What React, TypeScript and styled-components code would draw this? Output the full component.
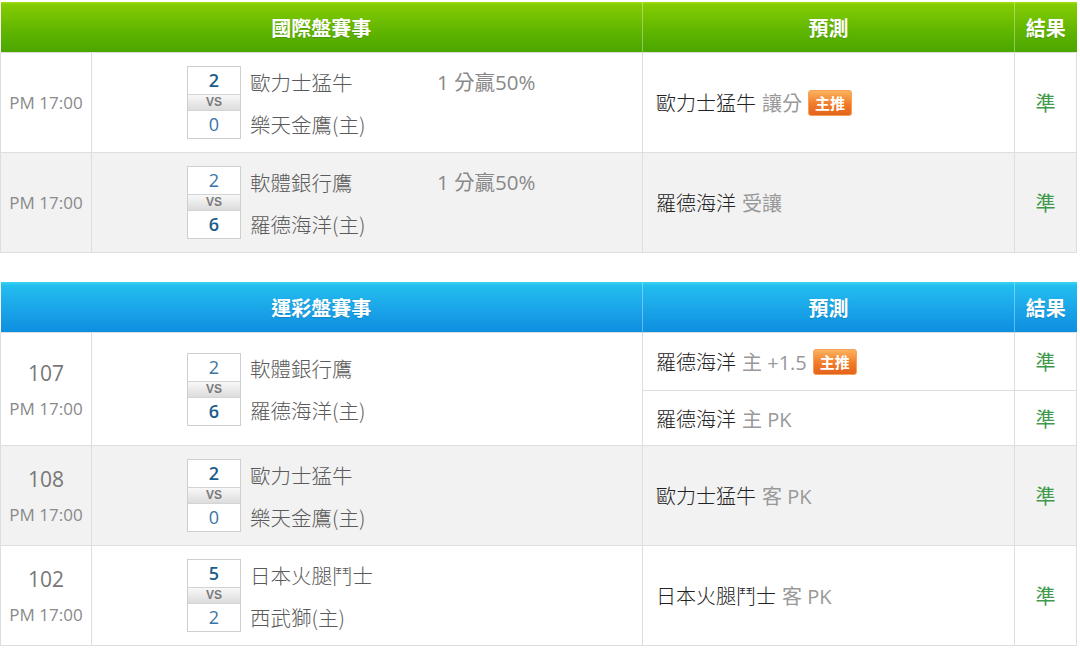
import React from "react";
import styled, { createGlobalStyle, css } from "styled-components";

const GlobalStyle = createGlobalStyle`
  html, body {
    margin: 0;
    padding: 0;
    background: #fff;
  }
  body {
    font-family: "Open Sans", "Noto Sans CJK TC", sans-serif;
  }
`;

const Page = styled.div`
  width: 1076px;
  padding-top: 2px;
  display: flex;
  flex-direction: column;
  gap: 29px;
`;

const Table = styled.table`
  width: 1076px;
  border-collapse: collapse;
  table-layout: fixed;
`;

const HeadCell = styled.th<{ $tone: "green" | "blue" }>`
  height: 50px;
  padding: 0;
  color: #fff;
  font-family: "Noto Sans CJK TC", sans-serif;
  font-size: 20px;
  font-weight: 700;
  text-shadow: 0 1px 1px rgba(0, 0, 0, 0.15);
  border-left: 1px solid rgba(255, 255, 255, 0.35);
  ${(p) =>
    p.$tone === "green"
      ? css`
          background: linear-gradient(#a4e010 0, #84cc04 5%, #62b600 55%, #4aa600 100%);
        `
      : css`
          background: linear-gradient(#38d4f2 0, #22bdee 8%, #1aa4e8 55%, #0d8fe0 100%);
        `}
  &:first-child {
    border-left: none;
  }
`;

const Row = styled.tr<{ $shade?: boolean }>`
  background: ${(p) => (p.$shade ? "#f2f2f2" : "#fff")};
`;

const Cell = styled.td`
  border: 1px solid #dedede;
  padding: 0;
  vertical-align: middle;
`;

const TimeCell = styled(Cell)`
  color: #8a8a8a;
  font-size: 17px;
  text-align: center;
`;

const GameNo = styled.div`
  font-size: 21px;
  color: #777;
  line-height: 28px;
  margin-bottom: 10px;
`;

const Matchup = styled.div`
  display: flex;
  justify-content: center;
  align-items: center;
  height: 99px;
`;

const ScoreBox = styled.div`
  width: 54px;
  display: flex;
  flex-direction: column;
  border: 1px solid #cfcfcf;
  background: #fff;
  box-sizing: border-box;
`;

const Score = styled.div<{ $win?: boolean }>`
  height: 27px;
  line-height: 27px;
  text-align: center;
  font-size: 18px;
  color: ${(p) => (p.$win ? "#1d5c8c" : "#3a74a6")};
  font-weight: ${(p) => (p.$win ? 600 : 400)};
`;

const Vs = styled.div`
  height: 15px;
  line-height: 15px;
  text-align: center;
  font-family: "Liberation Sans", Arial, sans-serif;
  font-size: 12px;
  font-weight: 700;
  color: #7a7a7a;
  background: linear-gradient(#f8f8f8, #dcdcdc);
  border-top: 1px solid #d4d4d4;
  border-bottom: 1px solid #d4d4d4;
`;

const Teams = styled.div`
  width: 187px;
  margin-left: 9px;
  height: 70px;
  display: flex;
  flex-direction: column;
  justify-content: space-between;
`;

const TeamName = styled.div`
  font-family: "Noto Sans CJK TC", sans-serif;
  font-size: 20.5px;
  font-weight: 300;
  line-height: 28px;
  color: #5a5a5a;
  white-space: nowrap;
`;

const Handicap = styled.div`
  width: 110px;
  height: 70px;
  font-size: 20.5px;
  line-height: 28px;
  color: #888;
  white-space: nowrap;
`;

const PickCell = styled(Cell)<{ $h: number }>`
  height: ${(p) => p.$h}px;
  padding-left: 13px;
  font-size: 20px;
  white-space: nowrap;
`;

const PickTeam = styled.span`
  font-family: "Noto Sans CJK TC", sans-serif;
  font-weight: 300;
  color: #222;
`;

const PickNote = styled.span`
  color: #999;
  margin-left: 6px;
`;

const Badge = styled.span`
  display: inline-block;
  margin-left: 6px;
  padding: 0 6px;
  height: 24px;
  line-height: 24px;
  border-radius: 3px;
  background: linear-gradient(#fbb25c, #f07b2a 55%, #e4631b);
  border: 1px solid #f5a35a;
  color: #fff;
  font-size: 15px;
  font-weight: 700;
  vertical-align: 2px;
`;

const ResultCell = styled(Cell)`
  text-align: center;
  color: #3f9a4c;
  font-family: "Noto Sans CJK TC", sans-serif;
  font-size: 20px;
`;

interface Pick {
  team: string;
  note: string;
  badge?: boolean;
  result: string;
}

interface Game {
  no?: string;
  time: string;
  away: string;
  home: string;
  awayScore: number;
  homeScore: number;
  handicap?: string;
  picks: Pick[];
}

const intlGames: Game[] = [
  {
    time: "PM 17:00",
    away: "歐力士猛牛",
    home: "樂天金鷹(主)",
    awayScore: 2,
    homeScore: 0,
    handicap: "1 分贏50%",
    picks: [{ team: "歐力士猛牛", note: "讓分", badge: true, result: "準" }],
  },
  {
    time: "PM 17:00",
    away: "軟體銀行鷹",
    home: "羅德海洋(主)",
    awayScore: 2,
    homeScore: 6,
    handicap: "1 分贏50%",
    picks: [{ team: "羅德海洋", note: "受讓", result: "準" }],
  },
];

const sportGames: Game[] = [
  {
    no: "107",
    time: "PM 17:00",
    away: "軟體銀行鷹",
    home: "羅德海洋(主)",
    awayScore: 2,
    homeScore: 6,
    picks: [
      { team: "羅德海洋", note: "主 +1.5", badge: true, result: "準" },
      { team: "羅德海洋", note: "主 PK", result: "準" },
    ],
  },
  {
    no: "108",
    time: "PM 17:00",
    away: "歐力士猛牛",
    home: "樂天金鷹(主)",
    awayScore: 2,
    homeScore: 0,
    picks: [{ team: "歐力士猛牛", note: "客 PK", result: "準" }],
  },
  {
    no: "102",
    time: "PM 17:00",
    away: "日本火腿鬥士",
    home: "西武獅(主)",
    awayScore: 5,
    homeScore: 2,
    picks: [{ team: "日本火腿鬥士", note: "客 PK", result: "準" }],
  },
];

const PickContent: React.FC<{ pick: Pick }> = ({ pick }) => (
  <>
    <PickTeam>{pick.team}</PickTeam>
    <PickNote>{pick.note}</PickNote>
    {pick.badge && <Badge>主推</Badge>}
  </>
);

const GameRows: React.FC<{ game: Game; shade: boolean }> = ({ game, shade }) => {
  const span = game.picks.length;
  const pickHeight = span > 1 ? [57, 54] : [99];
  const [first, ...rest] = game.picks;
  return (
    <>
      <Row $shade={shade}>
        <TimeCell rowSpan={span}>
          {game.no && <GameNo>{game.no}</GameNo>}
          {game.time}
        </TimeCell>
        <Cell rowSpan={span}>
          <Matchup>
            <ScoreBox>
              <Score $win={game.awayScore > game.homeScore}>{game.awayScore}</Score>
              <Vs>VS</Vs>
              <Score $win={game.homeScore > game.awayScore}>{game.homeScore}</Score>
            </ScoreBox>
            <Teams>
              <TeamName>{game.away}</TeamName>
              <TeamName>{game.home}</TeamName>
            </Teams>
            <Handicap>{game.handicap}</Handicap>
          </Matchup>
        </Cell>
        <PickCell $h={pickHeight[0]}>
          <PickContent pick={first} />
        </PickCell>
        <ResultCell>{first.result}</ResultCell>
      </Row>
      {rest.map((pick, i) => (
        <Row $shade={shade} key={i}>
          <PickCell $h={pickHeight[i + 1]}>
            <PickContent pick={pick} />
          </PickCell>
          <ResultCell>{pick.result}</ResultCell>
        </Row>
      ))}
    </>
  );
};

const GameTable: React.FC<{ title: string; tone: "green" | "blue"; games: Game[] }> = ({
  title,
  tone,
  games,
}) => (
  <Table>
    <colgroup>
      <col style={{ width: 91 }} />
      <col style={{ width: 551 }} />
      <col style={{ width: 372 }} />
      <col style={{ width: 62 }} />
    </colgroup>
    <thead>
      <tr>
        <HeadCell $tone={tone} colSpan={2}>
          {title}
        </HeadCell>
        <HeadCell $tone={tone}>預測</HeadCell>
        <HeadCell $tone={tone}>結果</HeadCell>
      </tr>
    </thead>
    <tbody>
      {games.map((g, i) => (
        <GameRows key={i} game={g} shade={i % 2 === 1} />
      ))}
    </tbody>
  </Table>
);

const App: React.FC = () => (
  <>
    <GlobalStyle />
    <Page>
      <GameTable title="國際盤賽事" tone="green" games={intlGames} />
      <GameTable title="運彩盤賽事" tone="blue" games={sportGames} />
    </Page>
  </>
);

export default App;
